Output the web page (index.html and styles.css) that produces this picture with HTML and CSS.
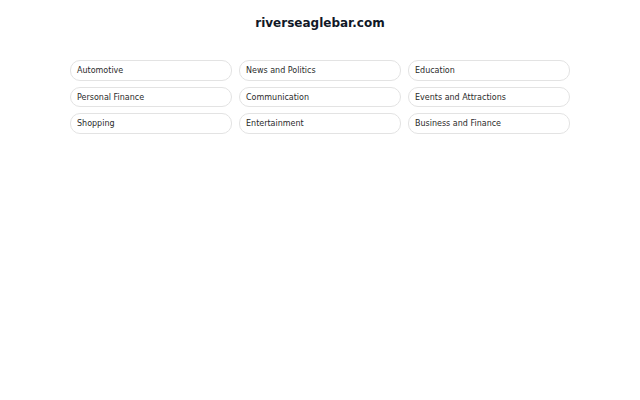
FILE: index.html
```html
<!DOCTYPE html>
<html lang="en">
<head>
  <meta charset="UTF-8">
  <title>riverseaglebar.com</title>
  <link rel="stylesheet" href="styles.css">
</head>
<body>

<header class="site-title">riverseaglebar.com</header>

<div class="links">
  <a class="pill" href="#">Automotive</a>
  <a class="pill" href="#">News and Politics</a>
  <a class="pill" href="#">Education</a>
  <a class="pill" href="#">Personal Finance</a>
  <a class="pill" href="#">Communication</a>
  <a class="pill" href="#">Events and Attractions</a>
  <a class="pill" href="#">Shopping</a>
  <a class="pill" href="#">Entertainment</a>
  <a class="pill" href="#">Business and Finance</a>
</div>

</body>
</html>
```

FILE: styles.css
```css
body { font-family: "DejaVu Sans", sans-serif; margin: 0; background: #fff; color: #222; }
.site-title { text-align: center; font-weight: bold; font-size: 12px; color: #111827; padding-top: 16px; line-height: 14px; }
.links { width: 500px; margin: 30px auto 0; display: grid; grid-template-columns: repeat(3, 1fr); column-gap: 7px; row-gap: 6px; }
.pill { display: block; height: 17.5px; line-height: 17.5px; padding: 1px 6px 0; border: 1px solid #e3e3e3; border-radius: 10px; font-size: 8px; color: #2b2b2b; text-decoration: none; }
```
